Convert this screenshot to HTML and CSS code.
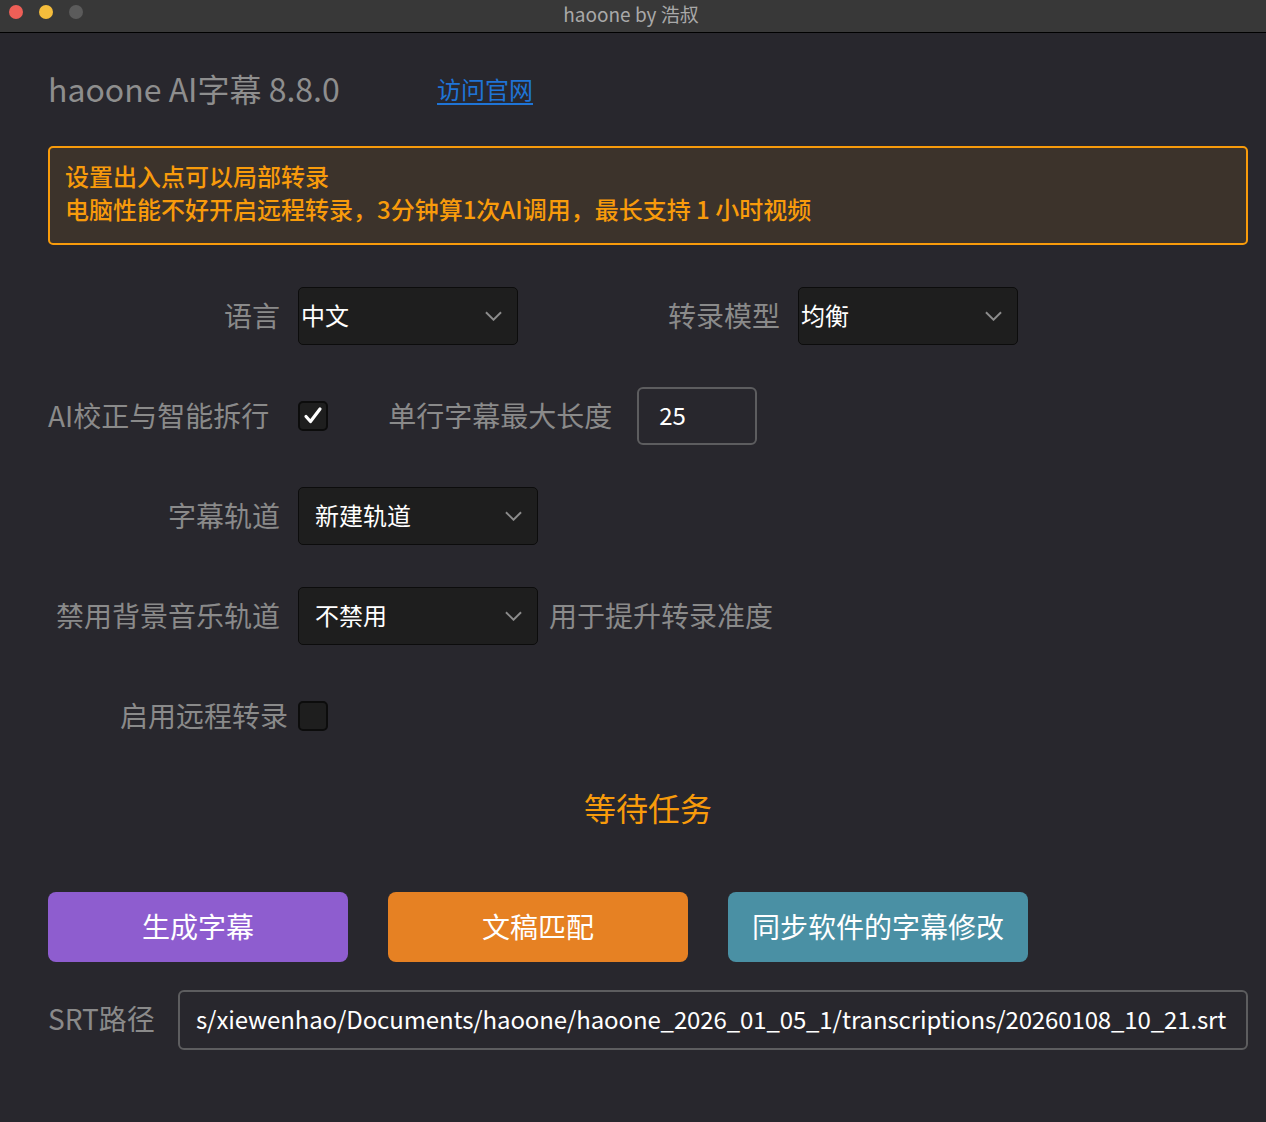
FILE: index.html
```html
<!DOCTYPE html>
<html>

<head>
	<meta charset="UTF-8">
	<title>haoone by 浩叔</title>
	<link rel="stylesheet" href="styles.css">
</head>

<body>
	<div class="title-bar">
		<div class="lights">
			<span class="light red"></span>
			<span class="light yellow"></span>
			<span class="light gray"></span>
		</div>
		<span class="title-text">haoone by 浩叔</span>
	</div>

	<div class="panel">
		<div class="header">
			<span class="app-name">haoone AI字幕 8.8.0</span>
			<a class="site-link" href="#">访问官网</a>
		</div>

		<div class="notice">
			<div>设置出入点可以局部转录</div>
			<div>电脑性能不好开启远程转录，3分钟算1次AI调用，最长支持 1 小时视频</div>
		</div>

		<div class="row">
			<span class="label">语言</span>
			<div class="select tight">
				<span>中文</span>
				<svg viewBox="0 0 18 10"><path d="M1 1l8 8 8-8" /></svg>
			</div>
			<span class="label label-model">转录模型</span>
			<div class="select tight">
				<span>均衡</span>
				<svg viewBox="0 0 18 10"><path d="M1 1l8 8 8-8" /></svg>
			</div>
		</div>

		<div class="row">
			<span class="label-free">AI校正与智能拆行</span>
			<span class="check checked">
				<svg viewBox="0 0 24 24"><path d="M5 12.5l4.5 5L19 5" /></svg>
			</span>
			<span class="label-free label-len">单行字幕最大长度</span>
			<input class="num-input" value="25" />
		</div>

		<div class="row">
			<span class="label">字幕轨道</span>
			<div class="select wide">
				<span>新建轨道</span>
				<svg viewBox="0 0 18 10"><path d="M1 1l8 8 8-8" /></svg>
			</div>
		</div>

		<div class="row">
			<span class="label">禁用背景音乐轨道</span>
			<div class="select wide">
				<span>不禁用</span>
				<svg viewBox="0 0 18 10"><path d="M1 1l8 8 8-8" /></svg>
			</div>
			<span class="hint">用于提升转录准度</span>
		</div>

		<div class="row">
			<span class="label label-remote">启用远程转录</span>
			<span class="check"></span>
		</div>

		<div class="status">等待任务</div>

		<div class="actions">
			<button class="btn btn-purple">生成字幕</button>
			<button class="btn btn-orange">文稿匹配</button>
			<button class="btn btn-teal">同步软件的字幕修改</button>
		</div>

		<div class="srt-row">
			<span class="srt-label">SRT路径</span>
			<input class="srt-input" value="s/xiewenhao/Documents/haoone/haoone_2026_01_05_1/transcriptions/20260108_10_21.srt" />
		</div>
	</div>
</body>

</html>
```

FILE: styles.css
```css
html,
body {
	width: 100%;
	height: 100%;
	margin: 0;
	padding: 0;
	font-family: "Noto Sans CJK SC", "Noto Sans", sans-serif;
	background: #28272d;
	overflow: hidden;
}

.title-bar {
	box-sizing: border-box;
	height: 33px;
	background: #383838;
	border-bottom: 1px solid #000;
	display: flex;
	justify-content: center;
	position: relative;
}

.lights {
	position: absolute;
	left: 9px;
	top: 5px;
	display: flex;
	gap: 16px;
}

.light {
	width: 14px;
	height: 14px;
	border-radius: 50%;
}

.light.red {
	background: #ee5f57;
}

.light.yellow {
	background: #f5bd3c;
}

.light.gray {
	background: #5b5b5b;
}

.title-text {
	color: #a9a9a9;
	font-size: 19px;
	line-height: 28px;
	margin-left: -4px;
}

.panel {
	padding: 0 18px 0 48px;
}

.header {
	height: 113px;
	display: flex;
	align-items: center;
	padding-bottom: 4px;
	box-sizing: border-box;
}

.app-name {
	color: #8e8e8e;
	font-size: 32px;
	width: 389px;
}

.site-link {
	color: #1f74d6;
	font-size: 24px;
	text-decoration: underline;
	text-underline-offset: 4px;
	margin-top: 2px;
}

.notice {
	box-sizing: border-box;
	height: 99px;
	border: 2px solid #f89b0b;
	border-radius: 5px;
	background: #3c332b;
	color: #f89b0b;
	font-size: 24px;
	font-weight: 500;
	line-height: 33px;
	padding: 11px 15px 0;
}

.row {
	height: 58px;
	margin-top: 42px;
	display: flex;
	align-items: center;
	color: #8a8a8a;
	font-size: 28px;
}

.label {
	width: 232px;
	text-align: right;
	margin-right: 18px;
	flex-shrink: 0;
	padding-bottom: 3px;
}

.label-model {
	width: 262px;
}

.label-remote {
	width: 240px;
	margin-right: 10px;
}

.label-free {
	flex-shrink: 0;
	padding-bottom: 3px;
}

.label-len {
	margin-left: 60px;
	margin-right: 25px;
}

.select {
	box-sizing: border-box;
	height: 58px;
	background: #1e1e1e;
	border: 1px solid #0c0c0c;
	border-radius: 5px;
	display: flex;
	align-items: center;
	justify-content: space-between;
	color: #fff;
	font-size: 24px;
	padding: 0 15px 3px 16px;
}

.select.tight {
	width: 220px;
	padding-left: 2px;
}

.select.wide {
	width: 240px;
}

.select svg {
	width: 17px;
	height: 10px;
	fill: none;
	stroke: #8c8c8c;
	stroke-width: 2;
	margin-top: 3px;
}

.hint {
	margin-left: 11px;
	padding-bottom: 3px;
}

.check {
	box-sizing: border-box;
	width: 30px;
	height: 30px;
	background: #1e1e1e;
	border: 2px solid #0c0c0c;
	border-radius: 5px;
	display: flex;
	align-items: center;
	justify-content: center;
	flex-shrink: 0;
}

.row .checked {
	margin-left: 29px;
}

.check svg {
	width: 24px;
	height: 24px;
	fill: none;
	stroke: #fff;
	stroke-width: 3.2;
	stroke-linecap: round;
	stroke-linejoin: round;
}

.num-input {
	box-sizing: border-box;
	width: 120px;
	height: 58px;
	background: transparent;
	border: 2px solid #5d5d5f;
	border-radius: 6px;
	color: #fff;
	font-family: inherit;
	font-size: 24px;
	padding: 0 20px 3px;
	outline: none;
}

.status {
	margin-top: 38px;
	text-align: center;
	color: #f89b0b;
	font-size: 32px;
	line-height: 48px;
}

.actions {
	margin-top: 61px;
	display: flex;
	gap: 40px;
}

.btn {
	width: 300px;
	height: 70px;
	border: none;
	border-radius: 8px;
	color: #fff;
	font-family: inherit;
	font-size: 28px;
	padding-bottom: 4px;
}

.btn-purple {
	background: #8e5dcf;
}

.btn-orange {
	background: #e68123;
}

.btn-teal {
	background: #4a90a4;
}

.srt-row {
	margin-top: 28px;
	display: flex;
	align-items: center;
}

.srt-label {
	width: 130px;
	color: #8a8a8a;
	font-size: 28px;
	padding-bottom: 4px;
}

.srt-input {
	box-sizing: border-box;
	flex: 1;
	height: 60px;
	background: transparent;
	border: 2px solid #5d5d5f;
	border-radius: 6px;
	color: #fff;
	font-family: inherit;
	font-size: 24px;
	letter-spacing: -0.12px;
	padding: 0 16px 3px;
	outline: none;
}
```
